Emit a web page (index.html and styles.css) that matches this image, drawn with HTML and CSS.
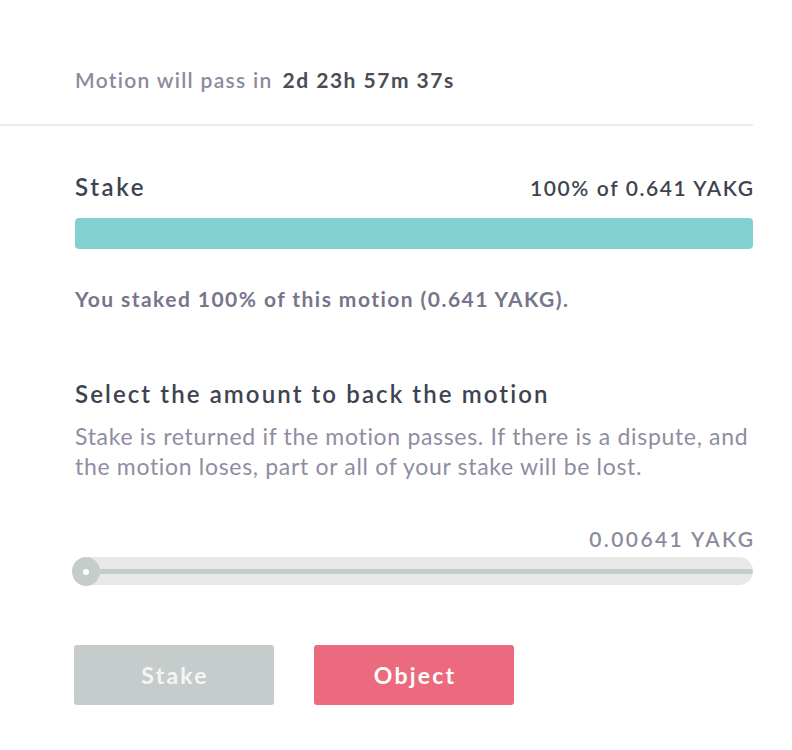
FILE: index.html
```html
<!DOCTYPE html>
<html lang="en">
<head>
<meta charset="utf-8">
<title>Stake</title>
<link rel="stylesheet" href="styles.css">
</head>
<body>
<div class="panel">
  <div class="countdown-row">
    <span class="countdown-label">Motion will pass in</span>
    <span class="countdown-value">2d 23h 57m 37s</span>
  </div>
  <hr class="divider">
  <div class="content">
    <div class="stake-head">
      <h2 class="section-title">Stake</h2>
      <span class="stake-total">100% of 0.641 YAKG</span>
    </div>
    <div class="progress"><div class="progress-fill" style="width:100%"></div></div>
    <p class="staked-note">You staked 100% of this motion (0.641 YAKG).</p>

    <h2 class="section-title select-title">Select the amount to back the motion</h2>
    <p class="description">Stake is returned if the motion passes. If there is a dispute, and the motion loses, part or all of your stake will be lost.</p>

    <div class="amount"><span class="amount-text">0.00641 YAKG</span></div>
    <div class="slider">
      <div class="slider-line"></div>
      <div class="slider-thumb"><span class="slider-dot"></span></div>
    </div>

    <div class="actions">
      <button class="btn btn-stake">Stake</button>
      <button class="btn btn-object">Object</button>
    </div>
  </div>
</div>
</body>
</html>
```
FILE: styles.css
```css
* { box-sizing: border-box; }
body {
  margin: 0;
  background: #fff;
  font-family: Lato, "Open Sans", sans-serif;
}
.panel { width: 753px; }
.countdown-row {
  padding: 67px 0 0 75px;
  height: 124px;
  display: flex;
  align-items: baseline;
  gap: 10px;
  line-height: 26px;
}
.countdown-label {
  font-size: 21px;
  font-weight: 600;
  color: #8c8aa0;
  letter-spacing: 1.3px;
}
.countdown-value {
  font-size: 21px;
  font-weight: 700;
  color: #4a4d56;
  letter-spacing: 1.5px;
}
.divider {
  margin: 0;
  border: 0;
  height: 2px;
  background: #ebebeb;
}
.content { padding: 0 0 0 75px; }
.stake-head {
  display: flex;
  justify-content: space-between;
  align-items: baseline;
  margin-top: 44px;
  height: 34px;
  line-height: 34px;
}
.section-title {
  margin: 0;
  font-size: 24px;
  font-weight: 600;
  color: #3d4350;
  letter-spacing: 2.1px;
}
.stake-head .section-title { letter-spacing: 2.6px; }
.stake-total {
  font-size: 21px;
  font-weight: 600;
  color: #3d4350;
  letter-spacing: 1.6px;
  margin-right: -1.6px;
}
.progress {
  margin-top: 14px;
  height: 31px;
  border-radius: 4px;
  background: #e7e7e7;
  overflow: hidden;
}
.progress-fill { height: 100%; background: #83d0d0; border-radius: 4px; }
.staked-note {
  margin: 36px 0 0;
  font-size: 21px;
  font-weight: 700;
  color: #77758c;
  letter-spacing: 1.45px;
  line-height: 28px;
}
.select-title { margin-top: 64px; line-height: 34px; }
.description {
  margin: 10px 0 0;
  font-size: 23px;
  line-height: 30px;
  color: #8f8da2;
  letter-spacing: 0.68px;
}
.amount {
  margin-top: 46px;
  text-align: right;
  line-height: 24px;
}
.amount-text {
  font-size: 21px;
  font-weight: 600;
  color: #8c8aa0;
  letter-spacing: 2.4px;
  margin-right: -2.4px;
}
.slider {
  position: relative;
  margin-top: 4px;
  height: 28px;
  border-radius: 14px;
  background: #e8e8e8;
}
.slider-line {
  position: absolute;
  left: 8px; right: 0;
  top: 12px;
  height: 5px;
  background: #c5cdcb;
  border-radius: 3px;
}
.slider-thumb {
  position: absolute;
  left: -3px; top: 0;
  width: 28px; height: 29px;
  border-radius: 50%;
  background: #c5cdcb;
  display: flex;
  align-items: center;
  justify-content: center;
}
.slider-dot {
  width: 6px; height: 6px;
  border-radius: 50%;
  background: #fff;
}
.actions {
  display: flex;
  gap: 40px;
  margin-top: 60px;
  margin-left: -1px;
}
.btn {
  width: 200px;
  height: 60px;
  border: 0;
  border-radius: 3px;
  font-family: inherit;
  font-size: 23px;
  font-weight: 700;
  letter-spacing: 2.2px;
  padding-left: 8px;
  color: #f4f6f6;
  cursor: pointer;
}
.btn-stake { background: #c5cccb; }
.btn-object { background: #ec6a7d; color: #fff; }
```
